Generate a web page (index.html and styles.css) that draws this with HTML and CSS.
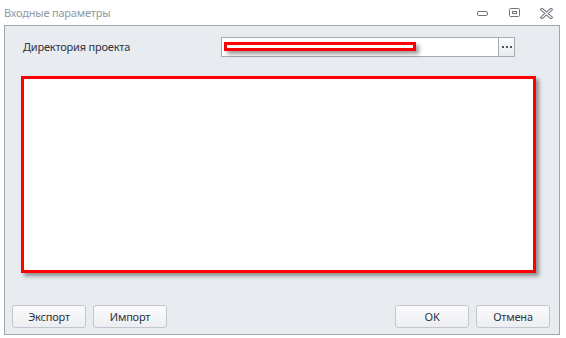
FILE: index.html
```html
<!DOCTYPE html>
<html lang="ru">
<head>
    <meta charset="UTF-8">
    <title>Входные параметры</title>
    <link rel="stylesheet" href="styles.css">
</head>
<body>
    <div class="titlebar">
        <span class="title">Входные параметры</span>
        <div class="win-controls">
            <svg class="ctl" width="13" height="10" viewBox="0 0 13 10">
                <rect x="1.5" y="3.5" width="10" height="4" rx="1.5" fill="none" stroke="#70757d"/>
            </svg>
            <svg class="ctl" width="13" height="10" viewBox="0 0 13 10">
                <rect x="1.5" y="0.5" width="10" height="8" rx="1" fill="none" stroke="#70757d"/>
                <rect x="4.5" y="3.5" width="4" height="2" fill="none" stroke="#70757d"/>
            </svg>
            <svg class="ctl" width="13" height="11" viewBox="0 0 13 11">
                <path d="M2 1.5 L11 9.5 M11 1.5 L2 9.5" stroke="#70757d" stroke-width="3.2" stroke-linecap="square"/>
                <path d="M2 1.5 L11 9.5 M11 1.5 L2 9.5" stroke="#fff" stroke-width="1.2" stroke-linecap="square"/>
            </svg>
        </div>
    </div>

    <div class="panel">
        <div class="field-row">
            <label class="field-label">Директория проекта</label>
            <div class="path-input">
                <div class="path-text"></div>
                <button class="browse-btn"><span></span><span></span><span></span></button>
                <div class="redact small"></div>
            </div>
        </div>

        <div class="params-box"></div>

        <div class="buttons">
            <div class="left">
                <button class="btn">Экспорт</button>
                <button class="btn">Импорт</button>
            </div>
            <div class="right">
                <button class="btn">OK</button>
                <button class="btn">Отмена</button>
            </div>
        </div>
    </div>
</body>
</html>
```

FILE: styles.css
```css
body {
    margin: 0;
    width: 566px;
    height: 338px;
    background-color: #fff;
    font-family: "Noto Sans", "Open Sans", sans-serif;
    font-size: 11px;
    letter-spacing: -0.2px;
    color: #2f343c;
    overflow: hidden;
}
.titlebar {
    height: 25px;
    display: flex;
    align-items: flex-start;
    justify-content: space-between;
}
.title {
    color: #9198a2;
    margin: 5px 0 0 4px;
    line-height: 16px;
}
.win-controls {
    display: flex;
    gap: 19px;
    margin: 8px 13px 0 0;
}
.ctl {
    display: block;
}
.panel {
    box-sizing: border-box;
    width: 556px;
    height: 310px;
    margin-left: 4px;
    border: 1px solid #9fa4aa;
    background-color: #e8ebef;
    display: flex;
    flex-direction: column;
}
.field-row {
    display: flex;
    align-items: center;
    margin-top: 11px;
    height: 20px;
}
.field-label {
    width: 198px;
    padding-left: 18px;
    color: #2f343c;
    line-height: 16px;
    margin-top: -1px;
}
.path-input {
    position: relative;
    box-sizing: border-box;
    width: 294px;
    height: 20px;
    border: 1px solid #a6aab0;
    background-color: #fff;
    display: flex;
}
.path-text {
    flex: 1;
}
.browse-btn {
    width: 16px;
    height: 18px;
    padding: 0;
    border: none;
    border-left: 1px solid #a6aab0;
    background: linear-gradient(#fafbfc, #e9ecef);
    display: flex;
    align-items: center;
    justify-content: center;
    gap: 2px;
}
.browse-btn span {
    width: 2px;
    height: 2px;
    background-color: #4f545b;
}
.redact {
    position: absolute;
    box-sizing: border-box;
    border: 3px solid #ff0000;
    background-color: #fff;
    box-shadow: 3px 3px 4px rgba(0, 0, 0, 0.4);
}
.redact.small {
    left: 2px;
    top: 4px;
    width: 192px;
    height: 9px;
}
.params-box {
    box-sizing: border-box;
    width: 515px;
    height: 197px;
    margin: 19px 0 0 16px;
    border: 3px solid #ff0000;
    background-color: #fff;
    box-shadow: 3px 3px 4px rgba(0, 0, 0, 0.4);
}
.buttons {
    display: flex;
    justify-content: space-between;
    margin: 32px 9px 0 7px;
}
.left, .right {
    display: flex;
    gap: 7px;
}
.btn {
    box-sizing: border-box;
    width: 74px;
    height: 23px;
    border: 1px solid #c3c7cd;
    border-radius: 3px;
    background: linear-gradient(#fbfbfc, #eceef1);
    font-family: "Noto Sans", "Open Sans", sans-serif;
    font-size: 11px;
    letter-spacing: -0.2px;
    color: #2f343c;
    padding: 0;
}
```
